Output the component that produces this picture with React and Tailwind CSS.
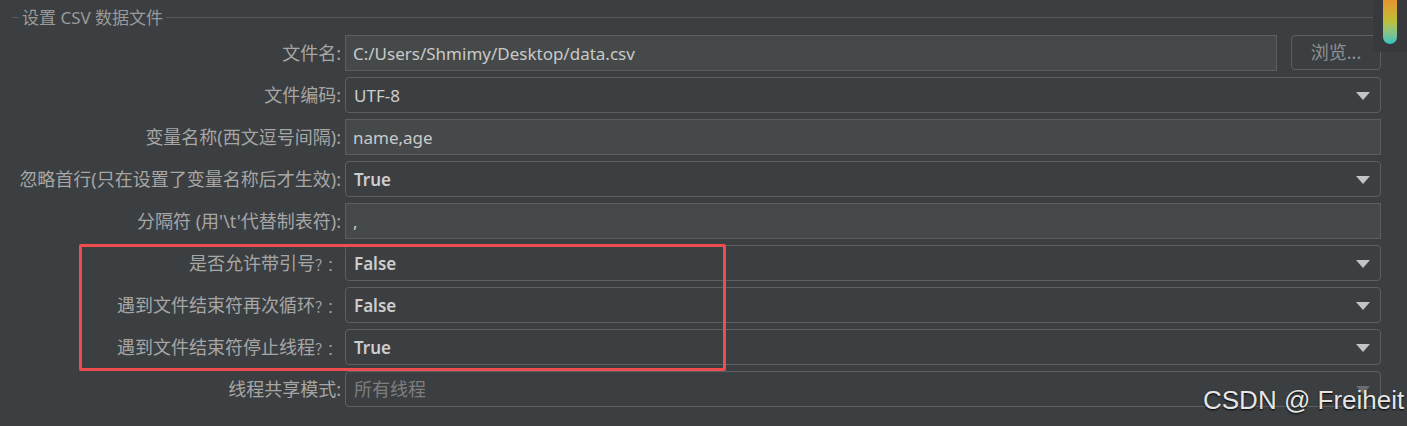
const rows = [
  { label: "文件名:", value: "C:/Users/Shmimy/Desktop/data.csv", kind: "text", button: "浏览..." },
  { label: "文件编码:", value: "UTF-8", kind: "select" },
  { label: "变量名称(西文逗号间隔):", value: "name,age", kind: "text" },
  { label: "忽略首行(只在设置了变量名称后才生效):", value: "True", kind: "select", bold: true },
  { label: "分隔符 (用'\\t'代替制表符):", value: ",", kind: "text" },
  { label: "是否允许带引号", q: true, value: "False", kind: "select", bold: true },
  { label: "遇到文件结束符再次循环", q: true, value: "False", kind: "select", bold: true },
  { label: "遇到文件结束符停止线程", q: true, value: "True", kind: "select", bold: true },
  { label: "线程共享模式:", value: "所有线程", kind: "select", disabled: true },
];

const Arrow = ({ dim }) => (
  <svg width="14" height="8" viewBox="0 0 14 8" className="shrink-0">
    <path d="M0 0 L14 0 L7 8 Z" fill={dim ? "#6a6d70" : "#c4c4c4"} />
  </svg>
);

const Row = ({ label, q, value, kind, button, disabled, bold }) => (
  <div className="flex items-center h-[36px]">
    <div className="w-[341px] text-right text-[18px] text-[#a6a6a6] whitespace-nowrap">
      {label}
      {q && <span className="text-[14px] tracking-[-2px] pr-[2px]">？：</span>}
    </div>
    <div className="flex flex-1 ml-[4px] gap-[14px] h-full">
      {kind === "text" ? (
        <div className="flex-1 flex items-center h-full pt-[1px] px-[7px] bg-[#45494a] border border-[#5b5e60] text-[#c9c9c9]">
          {value}
        </div>
      ) : (
        <div className="flex-1 flex items-center h-full pt-[1px] pl-[8px] pr-[10px] border border-[#5d6062] rounded-[4px]">
          <span
            className={
              disabled
                ? "flex-1 text-[18px] text-[#7c7e80]"
                : bold
                ? "flex-1 text-[#cdcdcd] font-semibold"
                : "flex-1 text-[#cdcdcd]"
            }
          >
            {value}
          </span>
          <Arrow dim={disabled} />
        </div>
      )}
      {button && (
        <div className="w-[90px] h-[35px] flex items-center justify-center border border-[#5d6062] rounded-[4px] text-[18px] text-[#8e9093]">
          {button}
        </div>
      )}
    </div>
  </div>
);

export default function App() {
  return (
    <div className="relative w-[1407px] h-[426px] overflow-hidden bg-[#3c3f41] text-[17px] font-['Noto_Sans','Noto_Sans_CJK_SC',sans-serif]">
      <div className="flex items-center h-[35px] pl-[12px] pr-[32px]">
        <div className="w-[7px] h-px bg-[#56595b]" />
        <span className="px-[3px] text-[17px] text-[#9a9a9a]">设置 CSV 数据文件</span>
        <div className="flex-1 h-px bg-[#56595b]" />
      </div>
      <div className="flex flex-col gap-[6px] pr-[26px]">
        {rows.map((r) => (
          <Row key={r.label} {...r} />
        ))}
      </div>

      <div className="absolute left-[79px] top-[244px] w-[647px] h-[127px] border-[3px] border-[#ef4d4d] rounded-[2px]" />

      <div className="absolute right-0 top-0 w-[34px] h-[52px] bg-[#37393c] rounded-bl-[6px]" />
      <div className="absolute left-[1383px] top-0 w-[14px] h-[44px] rounded-b-full bg-gradient-to-b from-[#e7922f] via-[#b8c038] to-[#25c3bf]" />

      <div className="absolute left-[1203px] top-[381px] text-[26px] text-[#e6e6e6] font-['Liberation_Sans',sans-serif] [text-shadow:0_1px_2px_#000]">
        CSDN @ Freiheit
      </div>
    </div>
  );
}
